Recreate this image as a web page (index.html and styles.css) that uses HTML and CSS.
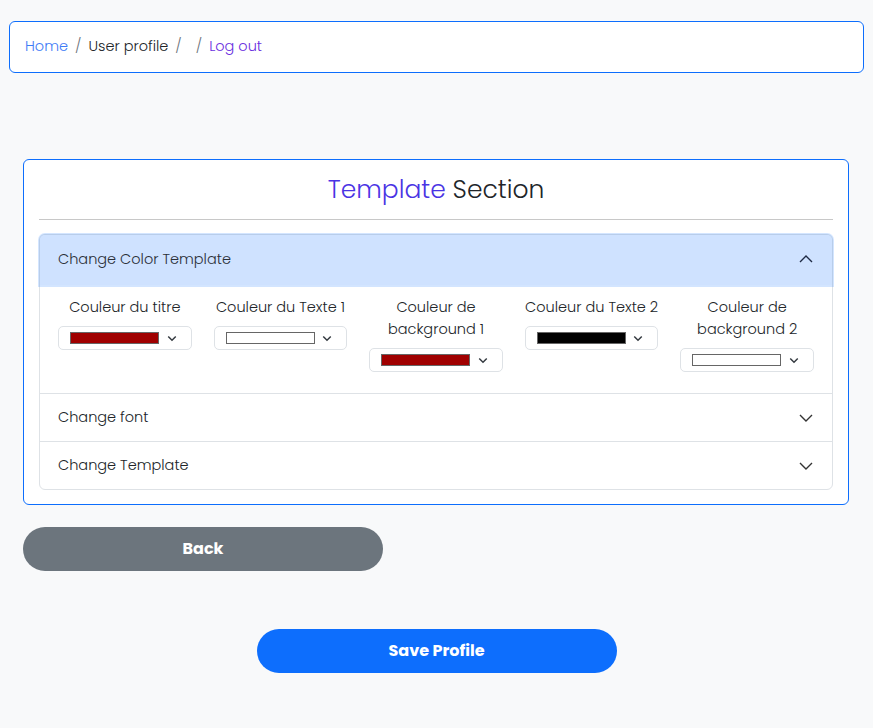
FILE: index.html
```html
<!DOCTYPE html>
<html>
<head>
<meta charset="utf-8">
<link rel="stylesheet" href="styles.css">
</head>
<body>
<nav class="crumbs">
  <a class="crumb home">Home</a>
  <span class="sep">/</span>
  <span class="crumb current">User profile</span>
  <span class="sep">/</span>
  <span class="crumb empty"></span>
  <span class="sep">/</span>
  <a class="crumb logout">Log out</a>
</nav>

<section class="card">
  <h2 class="title"><span class="accent">Template</span> Section</h2>
  <hr class="divider">
  <div class="accordion">
    <div class="acc-item">
      <div class="acc-head open">
        <span>Change Color Template</span>
        <svg class="chev" width="16" height="16" viewBox="0 0 16 16"><path d="M2 11l6-6 6 6" fill="none" stroke="currentColor" stroke-width="1.4"/></svg>
      </div>
      <div class="acc-body">
        <div class="field">
          <label>Couleur du titre</label>
          <div class="select"><span class="swatch red"></span><svg class="dd" width="12" height="12" viewBox="0 0 16 16"><path d="M3 6l5 5 5-5" fill="none" stroke="#343a40" stroke-width="2"/></svg></div>
        </div>
        <div class="field">
          <label>Couleur du Texte 1</label>
          <div class="select"><span class="swatch white"></span><svg class="dd" width="12" height="12" viewBox="0 0 16 16"><path d="M3 6l5 5 5-5" fill="none" stroke="#343a40" stroke-width="2"/></svg></div>
        </div>
        <div class="field">
          <label>Couleur de background 1</label>
          <div class="select"><span class="swatch red"></span><svg class="dd" width="12" height="12" viewBox="0 0 16 16"><path d="M3 6l5 5 5-5" fill="none" stroke="#343a40" stroke-width="2"/></svg></div>
        </div>
        <div class="field">
          <label>Couleur du Texte 2</label>
          <div class="select"><span class="swatch black"></span><svg class="dd" width="12" height="12" viewBox="0 0 16 16"><path d="M3 6l5 5 5-5" fill="none" stroke="#343a40" stroke-width="2"/></svg></div>
        </div>
        <div class="field">
          <label>Couleur de background 2</label>
          <div class="select"><span class="swatch white"></span><svg class="dd" width="12" height="12" viewBox="0 0 16 16"><path d="M3 6l5 5 5-5" fill="none" stroke="#343a40" stroke-width="2"/></svg></div>
        </div>
      </div>
    </div>
    <div class="acc-item">
      <div class="acc-head">
        <span>Change font</span>
        <svg class="chev" width="16" height="16" viewBox="0 0 16 16"><path d="M2 5l6 6 6-6" fill="none" stroke="currentColor" stroke-width="1.4"/></svg>
      </div>
    </div>
    <div class="acc-item">
      <div class="acc-head">
        <span>Change Template</span>
        <svg class="chev" width="16" height="16" viewBox="0 0 16 16"><path d="M2 5l6 6 6-6" fill="none" stroke="currentColor" stroke-width="1.4"/></svg>
      </div>
    </div>
  </div>
</section>

<div class="back-row"><button class="btn back">Back</button></div>
<div class="save-row"><button class="btn save">Save Profile</button></div>
</body>
</html>
```

FILE: styles.css
```css
* { box-sizing: border-box; }
body {
  margin: 0;
  background: #f8f9fa;
  font-family: "Poppins", "Inter", "Noto Sans", sans-serif;
  font-weight: 300;
  color: #212529;
  padding: 21px 9px 0 9px;
}
.crumbs {
  display: flex;
  align-items: center;
  height: 52px;
  border: 1px solid #0d6efd;
  border-radius: 6px;
  background: #fff;
  padding: 0 15px 2px 15px;
  font-size: 14.5px;
}
.crumb { white-space: nowrap; }
.home { color: #3f7cf6; }
.current { color: #212529; }
.logout { color: #6a2ee0; }
.sep { color: #6c757d; padding: 0 7px; }
.empty { width: 0; }

.card {
  margin: 86px 15px 0 14px;
  border: 1px solid #0d6efd;
  border-radius: 6px;
  background: #fff;
  padding: 0 15px 14px 15px;
}
.title {
  margin: 0;
  text-align: center;
  font-weight: 300;
  font-size: 25px;
  line-height: 30px;
  padding-top: 15px;
  color: #212529;
}
.accent { color: #4a34e4; }
.divider {
  border: 0;
  border-top: 1px solid #c8c8c8;
  margin: 14px 0 14px 0;
}
.accordion {
  border: 1px solid #dee2e6;
  border-radius: 6px;
}
.acc-item + .acc-item { border-top: 1px solid #dee2e6; }
.acc-head {
  display: flex;
  align-items: center;
  justify-content: space-between;
  height: 47px;
  padding: 0 18px;
  font-size: 14.5px;
  color: #212529;
}
.acc-head.open {
  background: #cfe2ff;
  color: #2b2f38;
  height: 50px;
  padding-bottom: 2px;
  border-radius: 5px 5px 0 0;
  box-shadow: 0 0 0 2px rgba(13,110,253,0.18);
  position: relative;
}
.chev { color: #333; }
.acc-head.open .chev { color: #1e2a44; }
.acc-body {
  display: grid;
  grid-template-columns: repeat(5, 1fr);
  column-gap: 22px;
  padding: 11px 18px 21px 18px;
  align-items: start;
}
.field {
  display: flex;
  flex-direction: column;
  align-items: center;
}
.field label {
  text-align: center;
  font-size: 14.5px;
  line-height: 22px;
  color: #212529;
  margin-bottom: 8px;
}
.select {
  width: 100%;
  height: 24px;
  border: 1px solid #dee2e6;
  border-radius: 5px;
  display: flex;
  align-items: center;
  padding: 0 13px 0 11px;
  justify-content: space-between;
}
.swatch {
  width: 89px;
  height: 12px;
  border: 1px solid #666;
}
.swatch.red { background: #a00000; }
.swatch.white { background: #fff; }
.swatch.black { background: #000; }

.back-row { padding: 22px 0 0 14px; }
.save-row { padding: 58px 0 0 0; display: flex; justify-content: center; }
.btn {
  width: 360px;
  height: 44px;
  border: 0;
  border-radius: 22px;
  color: #fff;
  font-family: inherit;
  font-weight: 700;
  font-size: 16px;
  padding: 0 0 2px 0;
}
.back { background: #6c757d; }
.save { background: #0d6efd; }
```
